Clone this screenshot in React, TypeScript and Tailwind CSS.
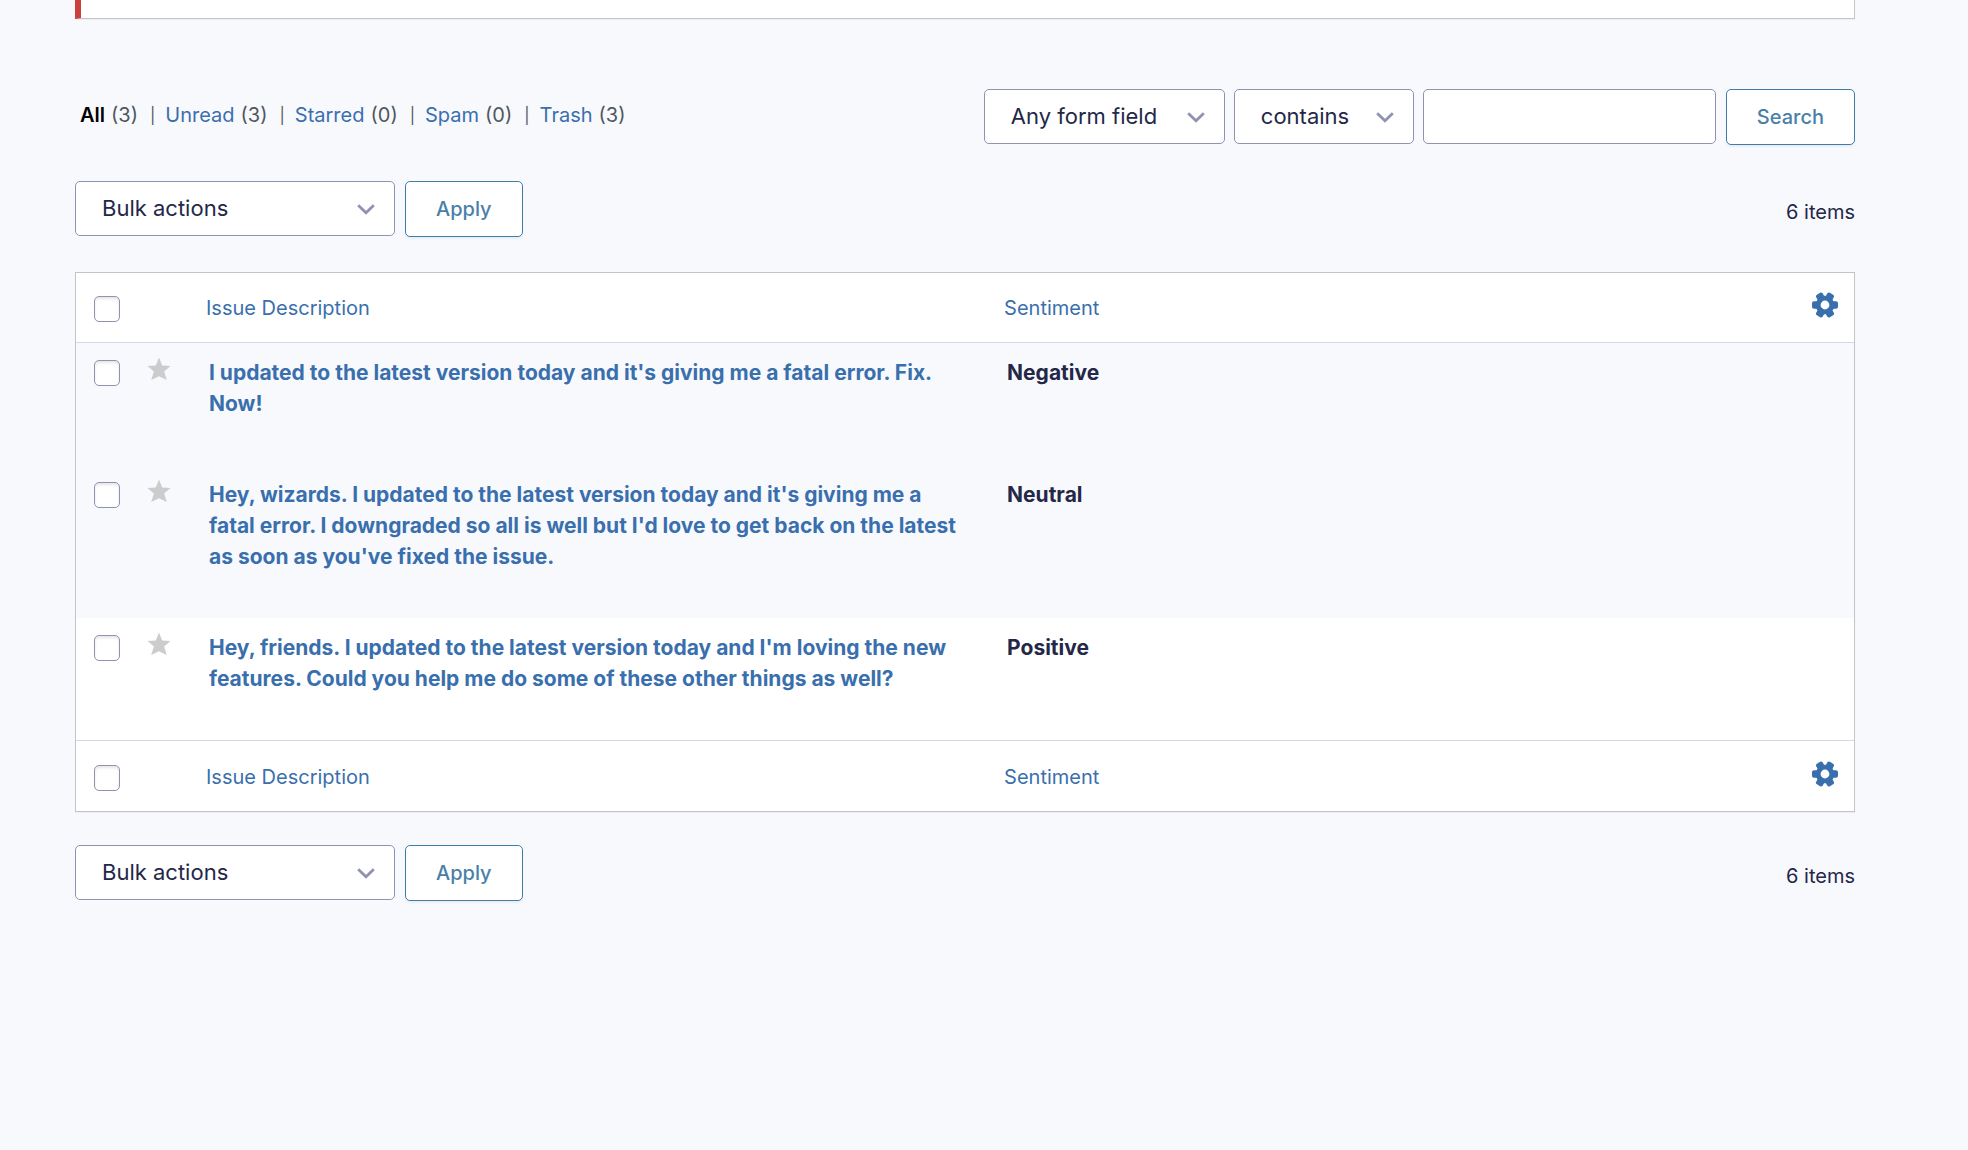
import type { ReactNode } from 'react';

type View = {
  label: string;
  count: number;
};

type Entry = {
  id: number;
  description: string;
  sentiment: string;
  isUnread: boolean;
};

const views: View[] = [
  { label: 'All', count: 3 },
  { label: 'Unread', count: 3 },
  { label: 'Starred', count: 0 },
  { label: 'Spam', count: 0 },
  { label: 'Trash', count: 3 },
];

const entries: Entry[] = [
  {
    id: 1,
    description: "I updated to the latest version today and it's giving me a fatal error. Fix. Now!",
    sentiment: 'Negative',
    isUnread: false,
  },
  {
    id: 2,
    description:
      "Hey, wizards. I updated to the latest version today and it's giving me a fatal error. I downgraded so all is well but I'd love to get back on the latest as soon as you've fixed the issue.",
    sentiment: 'Neutral',
    isUnread: false,
  },
  {
    id: 3,
    description:
      "Hey, friends. I updated to the latest version today and I'm loving the new features. Could you help me do some of these other things as well?",
    sentiment: 'Positive',
    isUnread: true,
  },
];

const GearIcon: React.FC = () => (
  <svg viewBox="-13 -13 26 26" className="block size-[26px] fill-[#3a6fad]" aria-hidden="true">
    {[0, 60, 120, 180, 240, 300].map((angle) => (
      <path key={angle} transform={`rotate(${angle})`} d="M6-5L8.500-3.800H11Q13-3.600 13-1.800V1.800Q13 3.600 11 3.800H8.500L6 5z" />
    ))}
    <circle r="6.800" fill="none" className="stroke-[#3a6fad]" strokeWidth="4.800" />
  </svg>
);

const StarIcon: React.FC = () => (
  <svg viewBox="0 0 24 24" className="block size-6 fill-[#cccccc]" aria-hidden="true">
    <path d="M12 .5l3.200 8 8.300.500-6.400 5.500 2.700 8.500-7.800-3.800L4.200 23l2.700-8.500L.5 9l8.300-.5z" />
  </svg>
);

type SelectProps = {
  id: string;
  label: string;
  options: string[];
  className: string;
};

const Select: React.FC<SelectProps> = ({ id, label, options, className }) => (
  <div className={`relative ${className}`}>
    <select
      id={id}
      aria-label={label}
      className="block h-[55px] w-full appearance-none rounded-[5px] border border-[#9092b2] bg-white pr-12 pl-[26px] text-[22px] text-[#242748]"
    >
      {options.map((o) => (
        <option key={o}>{o}</option>
      ))}
    </select>
    <svg
      viewBox="0 0 18 11"
      className="pointer-events-none absolute top-[23px] right-5 h-[11px] w-[18px] fill-none stroke-[#9092b2]"
      strokeWidth="2.800"
      aria-hidden="true"
    >
      <path d="M1.200 1.200L9 8.700l7.800-7.500" />
    </svg>
  </div>
);

const Button: React.FC<{ children: ReactNode }> = ({ children }) => (
  <button
    type="button"
    className="h-14 rounded-[5px] border border-[#3e7da6] bg-white px-[30px] text-xl font-medium text-[#4a7fa7] shadow-[0_2px_2px_rgba(58,58,87,0.06)]"
  >
    {children}
  </button>
);

const Checkbox: React.FC<{ label: string }> = ({ label }) => (
  <input
    type="checkbox"
    aria-label={label}
    className="block size-[26px] appearance-none rounded-[5px] border border-[#9092b2] bg-white shadow-[inset_0_2px_3px_rgba(0,0,0,0.1)]"
  />
);

const BulkActions: React.FC<{ id: string }> = ({ id }) => (
  <div className="flex items-start justify-between">
    <div className="flex gap-2.5">
      <Select id={id} label="Select bulk action" options={['Bulk actions']} className="w-80" />
      <Button>Apply</Button>
    </div>
    <span className="mt-4 text-xl leading-[30px] text-[#242748]">6 items</span>
  </div>
);

const HeadingRow: React.FC<{ label: string; className: string }> = ({ label, className }) => (
  <tr className={`bg-white text-left text-xl leading-[30px] text-[#3a6fad] ${className}`}>
    <td className="pt-1 pl-[18px]">
      <Checkbox label={label} />
    </td>
    <td />
    <th scope="col" className="pt-0.5 pl-3 font-normal">
      <a href="#description">Issue Description</a>
    </th>
    <th scope="col" className="pt-0.5 pl-2.5 font-normal">
      <a href="#sentiment">Sentiment</a>
    </th>
    <td className="pr-4 pb-1">
      <button type="button" aria-label="Select columns" className="ml-auto block">
        <GearIcon />
      </button>
    </td>
  </tr>
);

export default function App() {
  return (
    <div className="min-h-screen bg-[#f8f9fd] pr-[113px] pl-[75px] font-['Inter','Liberation_Sans',sans-serif] text-[#242748]">
      <div className="h-[19px] border-r border-b border-l-[6px] border-r-[#c3c4c7] border-b-[#c3c4c7] border-l-[#c9413d] bg-white shadow-[0_1px_1px_rgba(0,0,0,0.04)]" />

      <div className="mt-[70px] flex items-start justify-between">
        <ul className="flex pt-[11px] pl-[5px] text-xl leading-[30px] text-[#50575e]">
          {views.map((view, i) => (
            <li key={view.label} className="flex items-center gap-1.5">
              {i > 0 && <span className="pr-1 pl-3 text-base">|</span>}
              <a href={`#${view.label.toLowerCase()}`} className={i === 0 ? 'font-semibold text-black' : 'text-[#3a6fad]'}>
                {view.label}
              </a>
              <span>({view.count})</span>
            </li>
          ))}
        </ul>
        <div className="flex">
          <Select id="search-field" label="Search field" options={['Any form field']} className="mr-[9px] w-[241px]" />
          <Select id="search-operator" label="Operator" options={['contains']} className="mr-[9px] w-[180px]" />
          <input
            type="text"
            aria-label="Search value"
            className="mr-2.5 h-[55px] w-[293px] rounded-[5px] border border-[#9092b2] bg-white px-4 text-[22px]"
          />
          <Button>Search</Button>
        </div>
      </div>

      <div className="mt-9">
        <BulkActions id="bulk-top" />
      </div>

      <div className="mt-[35px] border border-[#c3c4c7] shadow-[0_1px_1px_rgba(0,0,0,0.04)]">
        <table className="w-full table-fixed border-collapse">
          <colgroup>
            <col className="w-[71px]" />
            <col className="w-[47px]" />
            <col className="w-[45%]" />
            <col />
            <col className="w-20" />
          </colgroup>
          <thead className="border-b border-[#d5d7e9]">
            <HeadingRow label="Select all" className="h-[69px]" />
          </thead>
          <tbody>
            {entries.map((entry) => (
              <tr key={entry.id} className={entry.isUnread ? 'bg-white align-top' : 'align-top'}>
                <td className="pt-[17px] pl-[18px]">
                  <Checkbox label={`Select entry ${entry.id}`} />
                </td>
                <td className="pt-3.5">
                  <button type="button" aria-label="Star entry" className="block">
                    <StarIcon />
                  </button>
                </td>
                <td className="pt-3.5 pr-6 pb-[46px] pl-[15px] text-[21px] leading-[31px] font-bold text-[#3a6fad]">
                  <a href={`#entry-${entry.id}`}>{entry.description}</a>
                </td>
                <td className="pt-3.5 pl-[13px] text-[21px] leading-[31px] font-bold">{entry.sentiment}</td>
                <td />
              </tr>
            ))}
          </tbody>
          <tfoot className="border-t border-[#d5d7e9]">
            <HeadingRow label="Select all entries" className="h-[71px]" />
          </tfoot>
        </table>
      </div>

      <div className="mt-[33px]">
        <BulkActions id="bulk-bottom" />
      </div>
    </div>
  );
}
